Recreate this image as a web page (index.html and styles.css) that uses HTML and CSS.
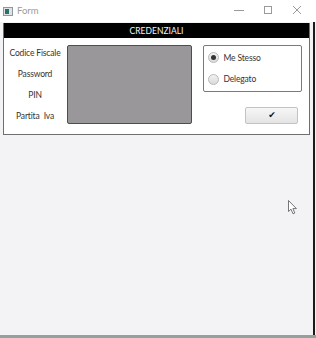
FILE: index.html
```html
<!DOCTYPE html>
<html>
<head>
<meta charset="utf-8">
<link rel="stylesheet" href="styles.css">
</head>
<body>
<div class="window">
  <div class="titlebar">
    <div class="app">
      <svg class="appicon" width="10" height="9" viewBox="0 0 10 9"><rect x="0.5" y="0.5" width="9" height="8" fill="#dfe3e6" stroke="#8a9aa0"/><rect x="2" y="2" width="4" height="5" fill="#2f6f6a"/></svg>
      <span class="title">Form</span>
    </div>
    <div class="controls">
      <svg width="10" height="10" viewBox="0 0 10 10"><line x1="0" y1="5.5" x2="10" y2="5.5" stroke="#9a9a9a" stroke-width="1"/></svg>
      <svg width="10" height="10" viewBox="0 0 10 10"><rect x="1.5" y="1.5" width="7" height="7" fill="none" stroke="#9a9a9a" stroke-width="1"/></svg>
      <svg width="10" height="10" viewBox="0 0 10 10"><path d="M1 1L9 9M9 1L1 9" stroke="#9a9a9a" stroke-width="1"/></svg>
    </div>
  </div>
  <div class="client">
    <div class="frame">
      <div class="header">CREDENZIALI</div>
      <div class="body">
        <div class="labels">
          <div class="label">Codice Fiscale</div>
          <div class="label">Password</div>
          <div class="label">PIN</div>
          <div class="label">Partita&nbsp;&nbsp;Iva</div>
        </div>
        <div class="panel"></div>
        <div class="side">
          <div class="group">
            <div class="radio"><span class="dot checked"></span><span>Me Stesso</span></div>
            <div class="radio"><span class="dot"></span><span>Delegato</span></div>
          </div>
          <div class="btn">&#10004;</div>
        </div>
      </div>
    </div>
    <svg class="cursor" width="10" height="15" viewBox="0 0 10 15"><path d="M0.5 0.5L0.5 11.5L3 9.2L5 13.8L6.8 13L4.9 8.6L8.4 8.6Z" fill="#fff" stroke="#555" stroke-width="0.8"/></svg>
  </div>
  <div class="bottombar"></div>
</div>
</body>
</html>
```
FILE: styles.css
```css
html, body {
  margin: 0;
  padding: 0;
}
body {
  width: 316px;
  height: 338px;
  overflow: hidden;
  background: #f3f2f5;
  font-family: "Lato", "Open Sans", sans-serif;
}
.window {
  width: 316px;
  height: 338px;
  display: flex;
  flex-direction: column;
}
.titlebar {
  height: 22px;
  background: #ffffff;
  display: flex;
  align-items: center;
  justify-content: space-between;
  flex: none;
}
.app {
  display: flex;
  align-items: center;
  padding-left: 3px;
  gap: 4px;
}
.title {
  font-size: 9.5px;
  color: #9c9c9c;
  margin-top: -1px;
}
.controls {
  display: flex;
  gap: 19px;
  padding-right: 14px;
  margin-top: -3px;
}
.client {
  flex: 1;
  position: relative;
  padding: 1px 0 0 3px;
  border-right: 2px solid #1b1b1b;
  margin-right: 1px;
}
.frame {
  width: 305px;
  border: 1px solid #6e6e6e;
  border-top: none;
  background: #ffffff;
}
.header {
  height: 15px;
  background: #000000;
  color: #f4f4f4;
  font-size: 8.5px;
  text-align: center;
  line-height: 16px;
}
.body {
  display: flex;
  padding: 7px 6px 10px 6px;
  height: 79px;
}
.label, .radio {
  font-size: 8.5px;
  color: #333333;
  letter-spacing: -0.15px;
}
.labels {
  width: 50px;
  display: flex;
  flex-direction: column;
  gap: 9px;
  padding-top: 2px;
  align-items: center;
}
.label {
  line-height: 12px;
  white-space: nowrap;
}
.panel {
  width: 124px;
  height: 77px;
  margin-left: 7px;
  background: #999799;
  border: 1px solid #4e4e4e;
  border-radius: 2px;
}
.side {
  margin-left: 11px;
  display: flex;
  flex-direction: column;
  width: 100px;
}
.group {
  width: 99px;
  height: 48px;
  border: 1px solid #7a7a7a;
  border-radius: 2px;
  display: flex;
  flex-direction: column;
  justify-content: space-around;
  padding: 1px 0 1px 4px;
  box-sizing: border-box;
}
.radio {
  display: flex;
  align-items: center;
  gap: 4px;
}
.dot {
  width: 11px;
  height: 11px;
  border-radius: 50%;
  border: 1px solid #b9b9b9;
  background: linear-gradient(#f2f2f2, #dadada);
  box-sizing: border-box;
  position: relative;
}
.dot.checked::after {
  content: "";
  position: absolute;
  left: 2px;
  top: 2px;
  width: 5px;
  height: 5px;
  border-radius: 50%;
  background: #333333;
}
.btn {
  margin-top: 15px;
  margin-left: 42px;
  width: 53px;
  height: 17px;
  box-sizing: border-box;
  border: 1px solid #c3c3c3;
  border-radius: 2px;
  background: linear-gradient(#f6f6f6, #e4e4e4);
  font-size: 9px;
  line-height: 15px;
  text-align: center;
  color: #111111;
  font-family: "DejaVu Sans", sans-serif;
  font-weight: bold;
}
.cursor {
  position: absolute;
  left: 288px;
  top: 178px;
}
.bottombar {
  height: 3px;
  background: #93a29d;
  flex: none;
}
```
